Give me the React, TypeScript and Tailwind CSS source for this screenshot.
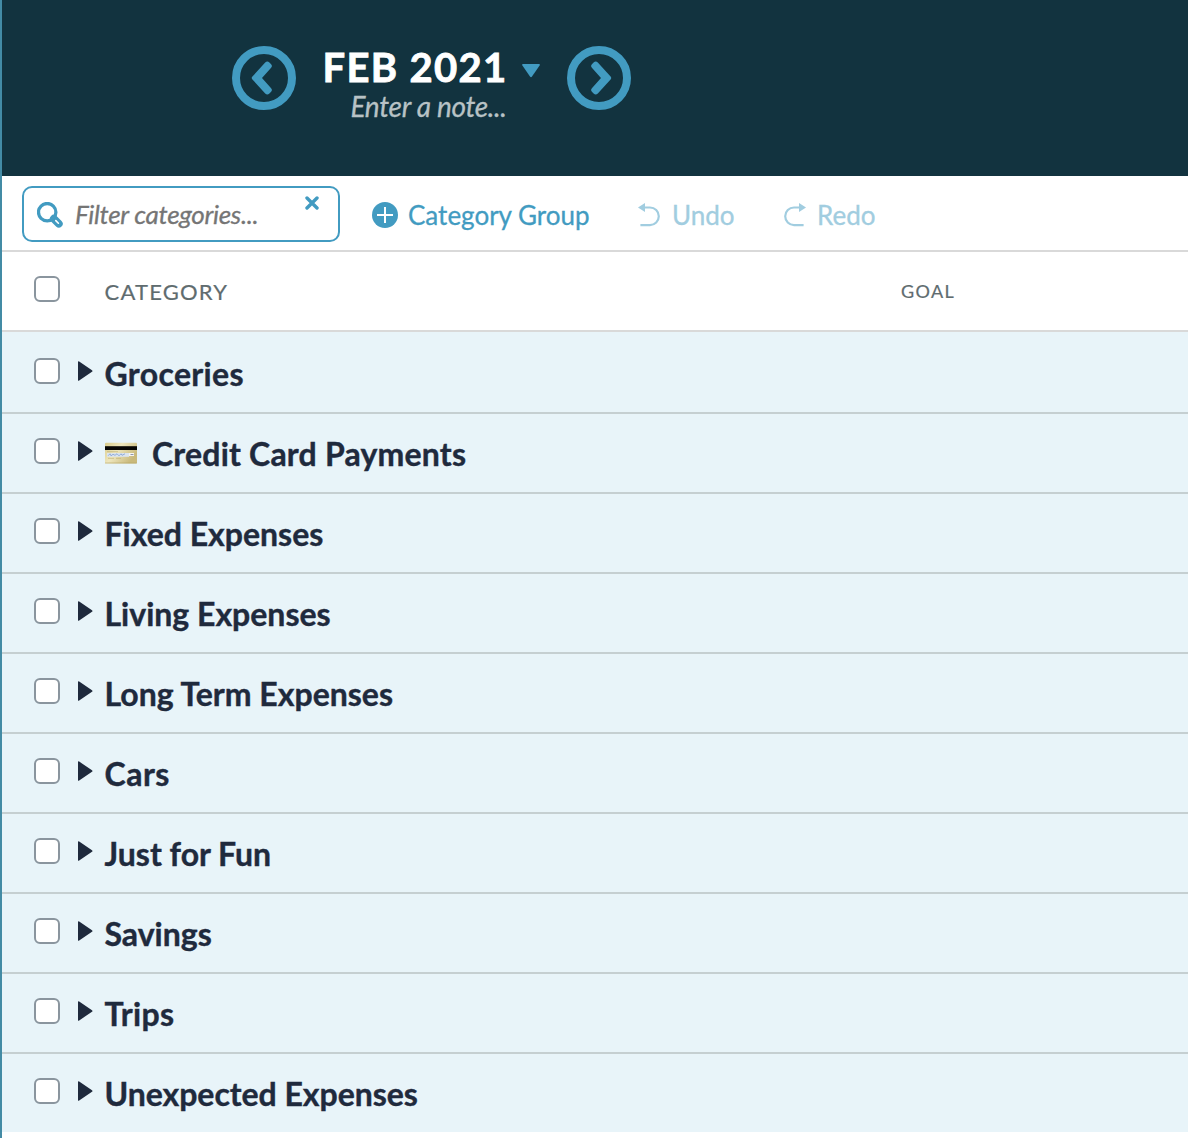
import React from "react";

const groups = [
  { name: "Groceries", spacing: "tracking-[0.35px]" },
  { name: "Credit Card Payments", spacing: "tracking-[0.2px]" },
  { name: "Fixed Expenses", spacing: "tracking-normal" },
  { name: "Living Expenses", spacing: "tracking-normal" },
  { name: "Long Term Expenses", spacing: "tracking-normal" },
  { name: "Cars", spacing: "tracking-[0.5px]" },
  { name: "Just for Fun", spacing: "tracking-normal" },
  { name: "Savings", spacing: "tracking-normal" },
  { name: "Trips", spacing: "tracking-[0.3px]" },
  { name: "Unexpected Expenses", spacing: "tracking-[-0.03px]" },
];

function CircleArrow({ flip = false }: { flip?: boolean }) {
  return (
    <svg width="64" height="64" viewBox="0 0 64 64" fill="none" className={flip ? "-scale-x-100" : ""}>
      <circle cx="32" cy="32" r="28" stroke="#429bc1" strokeWidth="8" />
      <path
        d="M33.200 16.600q2-2 4.200-.1l1.500 1.500q2 2 0 4.100L30 32l8.900 9.900q2 2.100 0 4.100l-1.500 1.500q-2.200 1.900-4.200-.1L20.200 33.200q-1-1.200 0-2.400z"
        fill="#429bc1"
      />
    </svg>
  );
}

function Checkbox() {
  return (
    <input
      type="checkbox"
      className="block h-[26px] w-[26px] shrink-0 appearance-none rounded-[6px] border-2 border-[#8a959e] bg-white"
    />
  );
}

function SearchIcon() {
  return (
    <svg width="26" height="26" viewBox="0 0 26 26" fill="none" stroke="#429bc1" className="mt-px">
      <circle cx="10.2" cy="10.2" r="8.7" strokeWidth="3.3" />
      <path d="M16.8 16.7l5 5" strokeWidth="7.8" strokeLinecap="round" />
      <path d="M18.8 18.6l2.600 2.600" stroke="#fff" strokeWidth="1.600" strokeLinecap="round" />
    </svg>
  );
}

function CurvedArrow({ flip = false }: { flip?: boolean }) {
  return (
    <svg width="22" height="24" viewBox="0 0 22 24" fill="none" className={flip ? "mt-[3px] -scale-x-100" : "mt-[3px]"}>
      <path d="M0 4.500L7 0v9z" fill="#a1cde0" />
      <path d="M5 4.500h7a8.800 8.800 0 0 1 0 17.600H2.400" stroke="#a1cde0" strokeWidth="2.200" />
    </svg>
  );
}

function CreditCard() {
  return (
    <svg width="32" height="22" viewBox="0 0 32 22" className="mr-[15px] ml-[0.5px]">
      <defs>
        <linearGradient id="card" x1="0" y1="0" x2="1" y2="0.5">
          <stop offset="0" stopColor="#d9cb8b" />
          <stop offset="0.45" stopColor="#eee6bd" />
          <stop offset="1" stopColor="#c9b97b" />
        </linearGradient>
      </defs>
      <rect y="0.8" width="32" height="20.6" rx="1" fill="url(#card)" />
      <rect y="4.2" width="32" height="3.8" fill="#080704" />
      <rect x="2" y="11" width="22" height="3.8" fill="#dbe4ee" />
      <path d="M3 13.8l2-2 1 2 2-1.5 2 1 2-1.5 2 2 2-2 1 1.5 3-1.5" stroke="#7f9ed3" strokeWidth="0.8" fill="none" />
      <rect x="24" y="11" width="5" height="3" fill="#f6f5ee" />
      <path d="M25.5 12.5h3" stroke="#858ba5" strokeWidth="0.9" />
      <path d="M2 9.7h11M3 16.3h6M11 16.3h5" stroke="#b9aa6c" strokeWidth="0.6" />
      <path d="M0 21h32" stroke="#b5a465" strokeWidth="0.6" />
    </svg>
  );
}

export default function App() {
  return (
    <div className="h-[1138px] w-[1188px] overflow-hidden border-l-2 border-[#438ba5] bg-white font-['Lato',sans-serif]">
      <header className="flex h-[176px] items-start bg-[#12333f] pt-[46px] pl-[230px]">
        <CircleArrow />
        <div className="ml-[26px] w-[245px]">
          <div className="flex h-[42px] items-center">
            <span className="w-[184px] pl-[0.5px] text-[40px] leading-[42px] font-bold tracking-[1.3px] whitespace-nowrap text-white [-webkit-text-stroke:0.8px_white]">
              FEB 2021
            </span>
            <svg width="18" height="14" viewBox="0 0 18 14" className="mt-[7px] ml-[16px]">
              <path d="M1 0h16q1.4.3.6 1.6L10 12.6q-1 1.2-2 0L.4 1.6Q-.4.3 1 0z" fill="#429bc1" />
            </svg>
          </div>
          <div className="pl-[28.5px] text-[28px] leading-[36px] tracking-[-0.3px] whitespace-nowrap text-[#b8c2c5] italic [-webkit-text-stroke:0.3px_#b8c2c5]">
            Enter a note...
          </div>
        </div>
        <CircleArrow flip />
      </header>

      <div className="flex h-[76px] items-center border-b-2 border-[#d9d9d9] pl-5">
        <div className="mt-[2px] flex h-[56px] w-[318px] items-center rounded-[10px] border-2 border-[#429bc1] pl-[13px]">
          <SearchIcon />
          <span className="ml-[12px] w-[230px] text-[26px] leading-8 tracking-[-0.3px] whitespace-nowrap text-[#757575] italic [-webkit-text-stroke:0.3px_#757575]">
            Filter categories...
          </span>
          <svg width="14" height="14" viewBox="0 0 14 14" className="mb-[23px]">
            <path d="M2 2l10 10M12 2L2 12" stroke="#429bc1" strokeWidth="3.4" strokeLinecap="round" />
          </svg>
        </div>
        <button className="ml-[32px] flex w-[266px] items-center text-[26px] leading-8 whitespace-nowrap text-[#429bc1]">
          <svg width="26" height="26" viewBox="0 0 26 26" className="mt-[4px] mr-[10px]">
            <circle cx="13" cy="13" r="13" fill="#429bc1" />
            <path d="M13 5v16M5 13h16" stroke="#fff" strokeWidth="2" />
          </svg>
          <span className="mt-[3px] [-webkit-text-stroke:0.3px_#429bc1]">Category Group</span>
        </button>
        <button className="flex w-[146px] items-center text-[26px] leading-8 whitespace-nowrap text-[#a1cde0]">
          <CurvedArrow />
          <span className="mt-[3px] ml-[12px] [-webkit-text-stroke:0.3px_#a1cde0]">Undo</span>
        </button>
        <button className="flex items-center text-[26px] leading-8 whitespace-nowrap text-[#a1cde0]">
          <CurvedArrow flip />
          <span className="mt-[3px] ml-[11px] [-webkit-text-stroke:0.3px_#a1cde0]">Redo</span>
        </button>
      </div>

      <div className="flex h-[80px] items-start border-b-2 border-[#d9d9d9] pl-8 text-[#5f6c6f] [-webkit-text-stroke:0.2px_#5f6c6f]">
        <div className="pt-[24px]">
          <Checkbox />
        </div>
        <span className="ml-[44.5px] w-[796.5px] pt-[26px] text-[22px] leading-[28px] tracking-[1.2px]">CATEGORY</span>
        <span className="pt-[26px] text-[18px] leading-[26px] tracking-[1.4px]">GOAL</span>
      </div>

      {groups.map(({ name, spacing }, i) => (
        <div
          key={name}
          className="flex h-[80px] items-center border-b-2 border-[#c5cfd1] bg-[#e8f4f9] pl-8 last:h-[78px] last:border-b-0 nth-[4]:h-[82px] nth-[4]:pt-[2px]"
        >
          <div className="pb-[4px]">
            <Checkbox />
          </div>
          <svg width="15" height="20" viewBox="0 0 15 20" className="mr-[11.5px] mb-[5px] ml-[18px]">
            <path d="M0 .8Q.2-.2 1.2.6L14 9.2q1 .8 0 1.6L1.2 19.4Q.2 20.2 0 19.2z" fill="#1f2a3d" />
          </svg>
          {i === 1 && <CreditCard />}
          <span className={`mt-[2px] text-[32px] leading-[40px] font-bold whitespace-nowrap text-[#1f2a3d] [-webkit-text-stroke:0.4px_#1f2a3d] ${spacing}`}>
            {name}
          </span>
        </div>
      ))}
    </div>
  );
}
